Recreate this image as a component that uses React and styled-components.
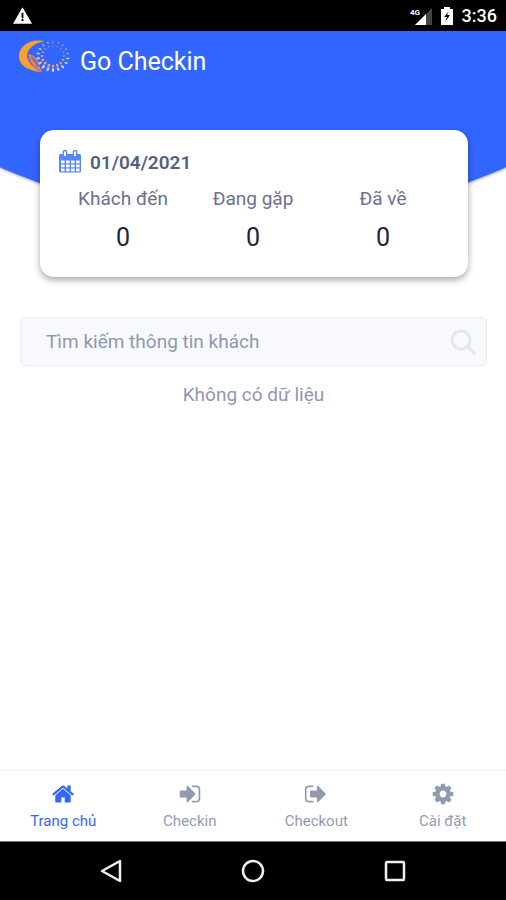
import styled, { createGlobalStyle, css } from 'styled-components';

const GlobalStyle = createGlobalStyle`
  * {
    box-sizing: border-box;
  }

  body {
    margin: 0;
    background: #fff;
    font-family: Roboto, 'Noto Sans', sans-serif;
  }
`;

const Page = styled.div`
  display: flex;
  flex-direction: column;
  min-height: 100vh;
`;

const StatusBar = styled.div`
  display: flex;
  align-items: center;
  justify-content: space-between;
  padding: 0 9px 0 13px;
  height: 31px;
  background: #000;
  color: #fff;

  .group {
    display: flex;
    align-items: center;
    gap: 9px;
  }

  .clock {
    font-size: 18px;
    font-weight: 500;
    line-height: 31px;
  }

  svg {
    display: block;
  }
`;

const Hero = styled.header`
  position: relative;
  overflow: hidden;
  padding-bottom: 20px;

  /* round backdrop, only its lower edge is visible */
  &::before {
    content: '';
    position: absolute;
    z-index: -1;
    left: 50%;
    bottom: 76px;
    width: 246%;
    aspect-ratio: 1;
    border-radius: 50%;
    background: #3366ff;
    box-shadow: 0 1px 3px rgba(0, 0, 0, 0.35);
    transform: translateX(-50%);
  }
`;

const Brand = styled.div`
  display: flex;
  align-items: center;
  gap: 8px;
  height: 62px;
  padding: 0 18px;

  svg {
    display: block;
    margin-bottom: 8px;
  }

  h1 {
    margin: 0;
    color: #fff;
    font-size: 25px;
    font-weight: 400;
    line-height: 32px;
  }
`;

const Card = styled.section`
  margin: 37px 38px 0 40px;
  padding: 19px 20px 16px 18px;
  border-radius: 14px;
  background: #fff;
  box-shadow: 0 3px 7px rgba(0, 0, 0, 0.35);
`;

const DateRow = styled.div`
  display: flex;
  align-items: center;
  gap: 8px;
  color: #555f80;
  font-size: 19px;
  font-weight: 600;
  line-height: 28px;

  svg {
    margin-bottom: 4px;
    color: #5585ff;
  }
`;

const Stats = styled.dl`
  display: grid;
  grid-template-columns: repeat(3, 1fr);
  margin: 6px 0 0;
  text-align: center;

  dt {
    color: #697290;
    font-size: 19px;
    line-height: 32px;
  }

  dd {
    margin: 0;
    color: #1d2340;
    font-size: 25px;
    line-height: 46px;
  }
`;

const Content = styled.main`
  flex: 1;
  padding: 20px 19px 20px 20px;
`;

const SearchBox = styled.form`
  display: flex;
  align-items: center;
  height: 49px;
  padding: 0 10px 0 25px;
  border: 1px solid #e8ecf3;
  border-radius: 5px;
  background: #f7f9fd;

  input {
    flex: 1;
    min-width: 0;
    padding: 0;
    border: 0;
    outline: 0;
    background: transparent;
    color: #222b45;
    font: inherit;
    font-size: 19px;
    line-height: 28px;

    &::placeholder {
      color: #8f98b0;
      opacity: 1;
    }
  }

  button {
    padding: 0;
    border: 0;
    background: none;
    color: #e2e7ef;
    cursor: pointer;
  }

  svg {
    display: block;
  }
`;

const Empty = styled.p`
  margin: 13px 0 0;
  color: #8f98b0;
  font-size: 19px;
  line-height: 32px;
  text-align: center;
`;

const TabBar = styled.nav`
  display: grid;
  grid-template-columns: repeat(4, 1fr);
  height: 71px;
  border-top: 1px solid #edf1f7;
  background: #fff;
`;

const Tab = styled.a`
  display: flex;
  flex-direction: column;
  align-items: center;
  gap: 4px;
  padding-top: 11px;
  color: #8f9bb3;
  font-size: 15px;
  line-height: 22px;
  text-decoration: none;

  ${({ $active }) =>
    $active &&
    css`
      color: #3366ff;
    `}
`;

const SystemBar = styled.div`
  display: flex;
  align-items: center;
  justify-content: center;
  gap: 118px;
  height: 59px;
  border-top: 1px solid #777;
  background: #000;

  button {
    padding: 0;
    border: 0;
    background: none;
    color: #f0f0f0;
  }

  svg {
    display: block;
  }
`;

const icons = {
  home: 'M1472 992v480q0 26-19 45t-45 19h-384v-384h-256v384h-384q-26 0-45-19t-19-45v-480q0-1 .5-3t.5-3l575-474 575 474q1 2 1 6zm223-69l-62 74q-8 9-21 11h-3q-13 0-21-7l-692-577-692 577q-12 8-24 7-13-2-21-11l-62-74q-8-10-7-23.5t11-21.5l719-599q32-26 76-26t76 26l244 204v-195q0-14 9-23t23-9h192q14 0 23 9t9 23v408l219 182q10 8 11 21.5t-7 23.5z',
  signIn:
    'M1312 896q0 26-19 45l-544 544q-19 19-45 19t-45-19-19-45v-288h-448q-26 0-45-19t-19-45v-384q0-26 19-45t45-19h448v-288q0-26 19-45t45-19 45 19l544 544q19 19 19 45zm352-352v704q0 119-84.5 203.5t-203.5 84.5h-320q-13 0-22.5-9.5t-9.5-22.5q0-4-1-20t-.5-26.5 3-23.5 10-19.5 20.5-6.5h320q66 0 113-47t47-113v-704q0-66-47-113t-113-47h-312l-11.5-1-11.5-3-8-5.5-7-9-2-13.5q0-4-1-20t-.5-26.5 3-23.5 10-19.5 20.5-6.5h320q119 0 203.5 84.5t84.5 203.5z',
  signOut:
    'M704 1440q0 4 1 20t.5 26.5-3 23.5-10 19.5-20.5 6.5h-320q-119 0-203.5-84.5t-84.5-203.5v-704q0-119 84.5-203.5t203.5-84.5h320q13 0 22.5 9.5t9.5 22.5q0 4 1 20t.5 26.5-3 23.5-10 19.5-20.5 6.5h-320q-66 0-113 47t-47 113v704q0 66 47 113t113 47h312l11.5 1 11.5 3 8 5.5 7 9 2 13.5zm928-544q0 26-19 45l-544 544q-19 19-45 19t-45-19-19-45v-288h-448q-26 0-45-19t-19-45v-384q0-26 19-45t45-19h448v-288q0-26 19-45t45-19 45 19l544 544q19 19 19 45z',
  cog: 'M1152 896q0-106-75-181t-181-75-181 75-75 181 75 181 181 75 181-75 75-181zm512-109v222q0 12-8 23t-20 13l-185 28q-19 54-39 91 35 50 107 138 10 12 10 25t-9 23q-27 37-99 108t-94 71q-12 0-26-9l-138-108q-44 23-91 38-16 136-29 186-7 28-36 28h-222q-14 0-24.5-8.5t-11.5-21.5l-28-184q-49-16-90-37l-141 107q-10 9-25 9-14 0-25-11-126-114-165-168-7-10-7-23 0-12 8-23 15-21 51-66.5t54-70.5q-27-50-41-99l-183-27q-13-2-21-12.5t-8-23.5v-222q0-12 8-23t19-13l186-28q14-46 39-92-40-57-107-138-10-12-10-24 0-10 9-23 26-36 98.5-107.5t94.5-71.5q13 0 26 10l138 107q44-23 91-38 16-136 29-186 7-28 36-28h222q14 0 24.5 8.5t11.5 21.5l28 184q49 16 90 37l142-107q9-9 24-9 13 0 25 10 129 119 165 170 7 8 7 22 0 12-8 23-15 21-51 66.5t-54 70.5q26 50 41 98l183 28q13 2 21 12.5t8 23.5z',
};

const Icon = ({ name, size }) => (
  <svg
    width={size}
    height={size}
    viewBox="0 0 1792 1792"
    fill="currentColor"
    aria-hidden="true"
  >
    <path d={icons[name]} />
  </svg>
);

const CalendarIcon = () => (
  <svg width="24" height="24" viewBox="0 0 24 24" aria-hidden="true">
    <rect x="1" y="5" width="22" height="18.500" rx="1.500" fill="currentColor" />
    {[12, 16, 20].map((y) =>
      [3, 8, 13, 18].map((x) => (
        <rect
          key={`${x}-${y}`}
          x={x}
          y={y - 0.5}
          width="3.600"
          height="2.800"
          fill="#fff"
        />
      ))
    )}
    {[7, 17].map((x) => (
      <rect
        key={x}
        x={x - 1.7}
        y="1.500"
        width="3.400"
        height="6.500"
        rx="1.700"
        fill="#fff"
        stroke="currentColor"
        strokeWidth="1.300"
      />
    ))}
  </svg>
);

const SearchIcon = () => (
  <svg
    width="26"
    height="26"
    viewBox="0 0 26 26"
    fill="none"
    stroke="currentColor"
    strokeWidth="3"
    strokeLinecap="round"
    aria-hidden="true"
  >
    <circle cx="11" cy="11" r="9" />
    <path d="M18 18l6 6" strokeWidth="3.500" />
  </svg>
);

// two rings of dots, heavier and warmer towards the lower left
const ring = (count, rx, ry, offset) =>
  Array.from({ length: count }, (_, i) => {
    const angle = ((i + offset) / count) * Math.PI * 2;
    return {
      x: 35 + rx * Math.cos(angle),
      y: 16 + ry * Math.sin(angle),
      angle: (angle * 180) / Math.PI,
      weight: (1 + Math.cos(angle - Math.PI * 0.6)) / 2,
    };
  });

const Logo = () => (
  <svg width="54" height="36" viewBox="0 0 54 36" aria-hidden="true">
    {ring(18, 15, 14, 0.5).map((dot) => (
      <ellipse
        key={dot.angle}
        cx={dot.x}
        cy={dot.y}
        rx={1.2 + dot.weight * 0.9}
        ry={0.5 + dot.weight * 0.8}
        fill={dot.y < 18 && dot.x > 30 ? '#b8a3b8' : '#d2cdd8'}
        transform={`rotate(${dot.angle} ${dot.x} ${dot.y})`}
      />
    ))}
    {ring(16, 11, 10, 0).map((dot) => (
      <ellipse
        key={dot.angle}
        cx={dot.x}
        cy={dot.y}
        rx={0.9 + dot.weight * 0.7}
        ry={0.4 + dot.weight * 0.9}
        fill={dot.weight > 0.5 ? '#f2a06c' : '#c39aa0'}
        transform={`rotate(${dot.angle} ${dot.x} ${dot.y})`}
      />
    ))}
    <path
      d="M27 1C11-2 1 7 1 16c0 9 8 15 23 16C15 28 10 23 9 16 9 9 16 3 27 1z"
      fill="#f9a12e"
    />
    <path
      d="M10 14c6 1 10 5 11 11l3 7C15 29 10 23 10 14z"
      fill="#ee8445"
    />
    <path
      d="M10 15c1 7 5 12 12 16"
      fill="none"
      stroke="#3f69ef"
      strokeWidth="1"
    />
    <path
      d="M13 17c3 2 5 5 7 10"
      fill="none"
      stroke="#5b6fd8"
      strokeWidth="2"
    />
  </svg>
);

const stats = [
  { label: 'Khách đến', value: 0 },
  { label: 'Đang gặp', value: 0 },
  { label: 'Đã về', value: 0 },
];

const tabs = [
  { id: 'home', icon: 'home', label: 'Trang chủ' },
  { id: 'checkin', icon: 'signIn', label: 'Checkin' },
  { id: 'checkout', icon: 'signOut', label: 'Checkout' },
  { id: 'settings', icon: 'cog', label: 'Cài đặt' },
];

const App = () => {
  return (
    <Page>
      <GlobalStyle />
      <StatusBar>
        <svg width="19" height="17" viewBox="0 0 21 18" aria-hidden="true">
          <path d="M10.500 0L21 18H0z" fill="#fff" />
          <path d="M9.500 6h2v6h-2zM9.500 13h2v2h-2z" fill="#000" />
        </svg>
        <div className="group">
          <svg width="22" height="18" viewBox="0 0 22 18" aria-hidden="true">
            <path d="M22 1v17H5z" fill="#444" />
            <path d="M16 7v11H5z" fill="#fff" />
            <text x="0" y="8" fill="#fff" fontSize="8" fontWeight="700">
              4G
            </text>
          </svg>
          <svg width="12" height="18" viewBox="0 0 12 18" aria-hidden="true">
            <path d="M3 0h6v2h3v16H0V2h3z" fill="#fff" />
            <path d="M8 4L3 10h3l-2 5 5-7H6z" fill="#000" />
          </svg>
          <span className="clock">3:36</span>
        </div>
      </StatusBar>
      <Hero>
        <Brand>
          <Logo />
          <h1>Go Checkin</h1>
        </Brand>
        <Card>
          <DateRow>
            <CalendarIcon />
            <time dateTime="2021-04-01">01/04/2021</time>
          </DateRow>
          <Stats>
            {stats.map(({ label, value }) => (
              <div key={label}>
                <dt>{label}</dt>
                <dd>{value}</dd>
              </div>
            ))}
          </Stats>
        </Card>
      </Hero>
      <Content>
        <SearchBox role="search" onSubmit={(e) => e.preventDefault()}>
          <input
            type="text"
            aria-label="Tìm kiếm thông tin khách"
            placeholder="Tìm kiếm thông tin khách"
          />
          <button type="submit" aria-label="Tìm kiếm">
            <SearchIcon />
          </button>
        </SearchBox>
        <Empty>Không có dữ liệu</Empty>
      </Content>
      <TabBar>
        {tabs.map(({ id, icon, label }) => (
          <Tab key={id} href={`#${id}`} $active={id === 'home'}>
            <Icon name={icon} size={24} />
            {label}
          </Tab>
        ))}
      </TabBar>
      <SystemBar>
        <button type="button" aria-label="Back">
          <svg width="24" height="24" viewBox="0 0 24 24">
            <path
              d="M21 2v20L3 12z"
              fill="none"
              stroke="currentColor"
              strokeWidth="2.500"
              strokeLinejoin="round"
            />
          </svg>
        </button>
        <button type="button" aria-label="Home">
          <svg width="24" height="24" viewBox="0 0 24 24">
            <circle
              cx="12"
              cy="12"
              r="10"
              fill="none"
              stroke="currentColor"
              strokeWidth="2.500"
            />
          </svg>
        </button>
        <button type="button" aria-label="Recent apps">
          <svg width="24" height="24" viewBox="0 0 24 24">
            <rect
              x="3"
              y="3"
              width="18"
              height="18"
              rx="1"
              fill="none"
              stroke="currentColor"
              strokeWidth="2.500"
            />
          </svg>
        </button>
      </SystemBar>
    </Page>
  );
};

export default App;
